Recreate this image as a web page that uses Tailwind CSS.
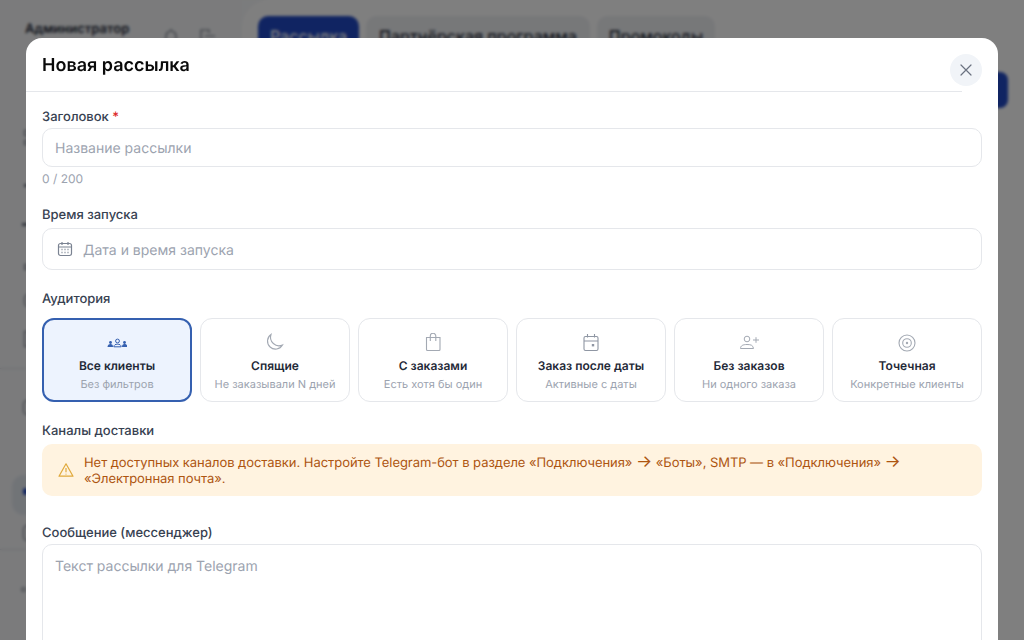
<!DOCTYPE html>
<html lang="ru">
<head>
<meta charset="utf-8">
<script src="https://cdn.jsdelivr.net/npm/@tailwindcss/browser@4"></script>
<title>Новая рассылка</title>
</head>
<body class="m-0 overflow-hidden font-['Inter','Noto_Sans',sans-serif] [text-rendering:geometricPrecision] antialiased">
<div class="relative w-[1024px] h-[640px] overflow-hidden bg-[#f7f8fa]">
  <!-- page behind the modal -->
  <div class="flex h-full">
    <aside class="w-[242px] shrink-0 bg-[#f6f7f9] pl-[25px] pt-[21px]">
      <div class="flex items-start">
        <span class="text-[13px] leading-4 font-semibold text-[#1f2937] w-[136px]">Администратор</span>
        <svg class="mt-[6px]" width="20" height="20" viewBox="0 0 20 20" fill="none" stroke="#6b7280" stroke-width="1.2"><path d="M5 14V9a5 5 0 0 1 10 0v5M10 2v2"/></svg>
        <svg class="mt-[6px] ml-4" width="20" height="20" viewBox="0 0 20 20" fill="none" stroke="#6b7280" stroke-width="1.2"><path d="M12 6V3H4v14h8v-3M8 9h10"/></svg>
      </div>
      <div class="relative mt-[60px] -ml-[25px] h-[500px]">
        <div class="absolute left-[24px] top-[23px] w-[10px] h-[6px] border border-[#6b7280]"></div>
        <div class="absolute left-[24px] top-[33px] w-[10px] h-[5px] border border-[#6b7280]"></div>
        <div class="absolute left-[24px] top-[77px] w-[4px] h-[3px] bg-[#6b7280]"></div>
        <div class="absolute left-[22px] top-[116px] w-[6px] h-[3px] bg-[#6b7280]"></div>
        <div class="absolute left-[24px] top-[157px] w-[4px] h-[6px] border border-[#6b7280]"></div>
        <div class="absolute left-[24px] top-[187px] w-[10px] h-[13px] border border-[#6b7280] rounded-sm"></div>
        <div class="absolute left-[24px] top-[224px] w-[10px] h-[16px] border border-[#6b7280]"></div>
        <div class="absolute left-[0px] top-[261px] w-[26px] h-px bg-[#d9dce1]"></div>
        <div class="absolute left-[23px] top-[293px] w-[10px] h-[15px] border border-[#6b7280] rounded-sm"></div>
        <div class="absolute left-[12px] top-[368px] w-[40px] h-[40px] rounded-xl bg-[#e3e8ef]"></div>
        <div class="absolute left-[23px] top-[381px] w-[5px] h-[7px] rounded-full bg-[#2149c4]"></div>
        <div class="absolute left-[23px] top-[418px] w-[8px] h-[16px] border border-[#6b7280] rounded-sm"></div>
        <div class="absolute left-[0px] top-[442px] w-[26px] h-px bg-[#d9dce1]"></div>
        <div class="absolute left-[21px] top-[480px] w-[5px] h-[5px] border border-[#6b7280] rounded-full"></div>
      </div>
    </aside>
    <main class="flex-1 rounded-tl-[28px] bg-[#ffffff] pl-[16px] pt-[16px] pr-[16px]">
      <div class="flex justify-between">
        <div class="flex gap-[7px]">
          <div class="h-[40px] w-[101px] rounded-[10px] bg-[#2149c4] text-white text-center text-[16px] leading-[40px] font-medium">Рассылка</div>
          <div class="h-[40px] w-[224px] rounded-[10px] bg-[#eef0f3] text-[#1f2937] text-center text-[16px] leading-[40px] font-medium">Партнёрская программа</div>
          <div class="h-[40px] w-[118px] rounded-[10px] bg-[#eef0f3] text-[#1f2937] text-center text-[16px] leading-[40px] font-medium">Промокоды</div>
        </div>
      </div>
      <div class="flex justify-end mt-[16px]">
        <div class="h-[36px] w-[60px] rounded-lg bg-[#2149c4]"></div>
      </div>
    </main>
  </div>

  <!-- dim layer and modal -->
  <div class="absolute inset-0 bg-black/50 backdrop-blur-[1.5px] pl-[26px] pt-[38px]">
    <section class="w-[972px] h-[640px] rounded-t-[16px] bg-white">
      <header class="relative h-[54px] pl-[16px] pt-[16px]">
        <h2 class="text-[18px] leading-[24px] font-semibold text-[#0a0a0a]">Новая рассылка</h2>
        <div class="absolute left-0 right-[36px] bottom-0 h-px bg-[#e5e7eb]"></div>
        <button class="absolute left-[924px] top-[16px] flex items-center justify-center w-[32px] h-[32px] rounded-full bg-[#f1f4f8]">
          <svg width="14" height="14" viewBox="0 0 14 14" fill="none" stroke="#6b7280" stroke-width="1.200" stroke-linecap="round"><path d="M2 2l10 10M12 2L2 12"/></svg>
        </button>
      </header>

      <div class="px-[16px] pt-[16px]">
        <label class="block text-[13px] leading-[18px] h-[20px] font-medium text-[#374151]">Заголовок <span class="text-[#dc2626]">*</span></label>
        <div class="h-[39px] rounded-[10px] border border-[#e5e7eb] pl-[12px] text-[14px] leading-[39px] text-[#9ca3af]">Название рассылки</div>
        <div class="mt-[4px] text-[12px] leading-[16px] text-[#9ca3af]">0 / 200</div>

        <label class="block mt-[19px] text-[13px] leading-[18px] h-[22px] font-medium text-[#374151]">Время запуска</label>
        <div class="flex items-center h-[42px] rounded-[10px] border border-[#e5e7eb] pl-[14px] text-[14px] text-[#9ca3af]">
          <svg width="16" height="16" viewBox="0 0 16 16" fill="none" stroke="#7b8392" stroke-width="1.2"><rect x="1.5" y="2.500" width="13" height="12" rx="2"/><path d="M1.500 6h13M5 1v3M11 1v3"/><path d="M4.500 8.500h1M7.500 8.500h1M10.500 8.500h1M4.500 11.500h1M7.500 11.500h1M10.500 11.500h1" stroke-width="1.300"/></svg>
          <span class="ml-[10px] relative top-[1px]">Дата и время запуска</span>
        </div>

        <label class="block mt-[20px] text-[13px] leading-[18px] h-[28px] font-medium text-[#374151]">Аудитория</label>
        <div class="grid grid-cols-6 gap-[8px]">
          <div class="h-[84px] rounded-[12px] border-2 border-[#3560b0] bg-[#edf3fe] flex flex-col items-center pt-[13px]">
            <svg width="20" height="20" viewBox="0 0 20 20" fill="#3560b0" stroke="none"><circle cx="10.500" cy="8" r="1.900" fill="none" stroke="#3560b0" stroke-width="1"/><path d="M6.800 13.800c.2-2 1.700-2.600 3.700-2.600s3.500.6 3.700 2.600z" fill="none" stroke="#3560b0" stroke-width="1"/><circle cx="3.500" cy="9.500" r="1.400"/><path d="M.5 14c.1-2 1.300-3 3-3s2.400.8 2.500 3z"/><circle cx="17.500" cy="9.500" r="1.400"/><path d="M15 14c.1-2.200.8-3 2.500-3s2.900 1 3 3z"/></svg>
            <div class="mt-[5px] text-[12px] leading-[16px] font-semibold text-[#1f2937]">Все клиенты</div>
            <div class="mt-[2px] text-[11px] leading-[16px] text-[#9ca3af]">Без фильтров</div>
          </div>
          <div class="h-[84px] rounded-[12px] border border-[#e5e7eb] flex flex-col items-center pt-[14px]">
            <svg width="20" height="20" viewBox="0 0 20 20" fill="none" stroke="#a3a9b3" stroke-width="1.100"><path d="M6 1.500A8 8 0 1 0 17.500 12 8.500 8.500 0 0 1 6 1.500z"/></svg>
            <div class="mt-[5px] text-[12px] leading-[16px] font-semibold text-[#1f2937]">Спящие</div>
            <div class="mt-[2px] text-[11px] leading-[16px] text-[#9ca3af]">Не заказывали N дней</div>
          </div>
          <div class="h-[84px] rounded-[12px] border border-[#e5e7eb] flex flex-col items-center pt-[14px]">
            <svg width="20" height="20" viewBox="0 0 20 20" fill="none" stroke="#a3a9b3" stroke-width="1.100"><path d="M3.500 4.500h13.500v12a1 1 0 0 1-1 1H4.500a1 1 0 0 1-1-1z"/><path d="M7.300 8V3a2.500 2.500 0 0 1 5.500 0v5"/></svg>
            <div class="mt-[5px] text-[12px] leading-[16px] font-semibold text-[#1f2937]">С заказами</div>
            <div class="mt-[2px] text-[11px] leading-[16px] text-[#9ca3af]">Есть хотя бы один</div>
          </div>
          <div class="h-[84px] rounded-[12px] border border-[#e5e7eb] flex flex-col items-center pt-[14px]">
            <svg width="20" height="20" viewBox="0 0 20 20" fill="none" stroke="#8f96a3" stroke-width="1.100"><rect x="3" y="3.500" width="14" height="14" rx="1.500"/><path d="M3 8h14M6.500 1v3.500M13.500 1v3.500"/><rect x="10.800" y="11" width="2.400" height="2.400" fill="#8f96a3" stroke="none"/></svg>
            <div class="mt-[5px] text-[12px] leading-[16px] font-semibold text-[#1f2937]">Заказ после даты</div>
            <div class="mt-[2px] text-[11px] leading-[16px] text-[#9ca3af]">Активные с даты</div>
          </div>
          <div class="h-[84px] rounded-[12px] border border-[#e5e7eb] flex flex-col items-center pt-[14px]">
            <svg width="20" height="20" viewBox="0 0 20 20" fill="none" stroke="#a3a9b3" stroke-width="1"><circle cx="8" cy="6" r="2.800"/><path d="M1.500 15.500c0-2.800 2.400-4 6.500-4s6 .8 6.500 4z"/><path d="M14 7h6M17 4.200v5.600"/></svg>
            <div class="mt-[5px] text-[12px] leading-[16px] font-semibold text-[#1f2937]">Без заказов</div>
            <div class="mt-[2px] text-[11px] leading-[16px] text-[#9ca3af]">Ни одного заказа</div>
          </div>
          <div class="h-[84px] rounded-[12px] border border-[#e5e7eb] flex flex-col items-center pt-[14px]">
            <svg width="20" height="20" viewBox="0 0 20 20" fill="none" stroke="#a3a9b3" stroke-width="1.100"><circle cx="10" cy="10" r="8"/><circle cx="10" cy="10" r="4.300"/><circle cx="10" cy="10" r="1.200" fill="#a3a9b3" stroke="none"/></svg>
            <div class="mt-[5px] text-[12px] leading-[16px] font-semibold text-[#1f2937]">Точечная</div>
            <div class="mt-[2px] text-[11px] leading-[16px] text-[#9ca3af]">Конкретные клиенты</div>
          </div>
        </div>

        <label class="block mt-[20px] text-[13px] leading-[18px] h-[22px] font-medium text-[#374151]">Каналы доставки</label>
        <div class="flex items-center h-[52px] rounded-[10px] bg-[#fff3e0] pl-[16px] pr-[16px]">
          <svg class="shrink-0" width="16" height="16" viewBox="0 0 16 16" fill="none" stroke="#e0a93b" stroke-width="1.200" stroke-linejoin="round"><path d="M8 1.800L15 14.200H1z"/><path d="M8 6v4.200M8 11.800v.8"/></svg>
          <p class="ml-[10px] pt-[2px] text-[13px] leading-[16px] tracking-[-0.05px] text-[#ad5510]">Нет доступных каналов доставки. Настройте Telegram-бот в разделе «Подключения» <span class="text-[17px] leading-[10px]">→</span> «Боты», SMTP — в «Подключения» <span class="text-[17px] leading-[10px]">→</span> «Электронная почта».</p>
        </div>

        <label class="block mt-[28px] text-[13px] leading-[18px] h-[20px] font-medium text-[#374151]">Сообщение (мессенджер)</label>
        <div class="h-[140px] rounded-[10px] border border-[#e5e7eb] pl-[12px] pt-[12px] text-[14px] leading-[20px] text-[#9ca3af]">Текст рассылки для Telegram</div>
      </div>
    </section>
  </div>
</div>
</body>
</html>
